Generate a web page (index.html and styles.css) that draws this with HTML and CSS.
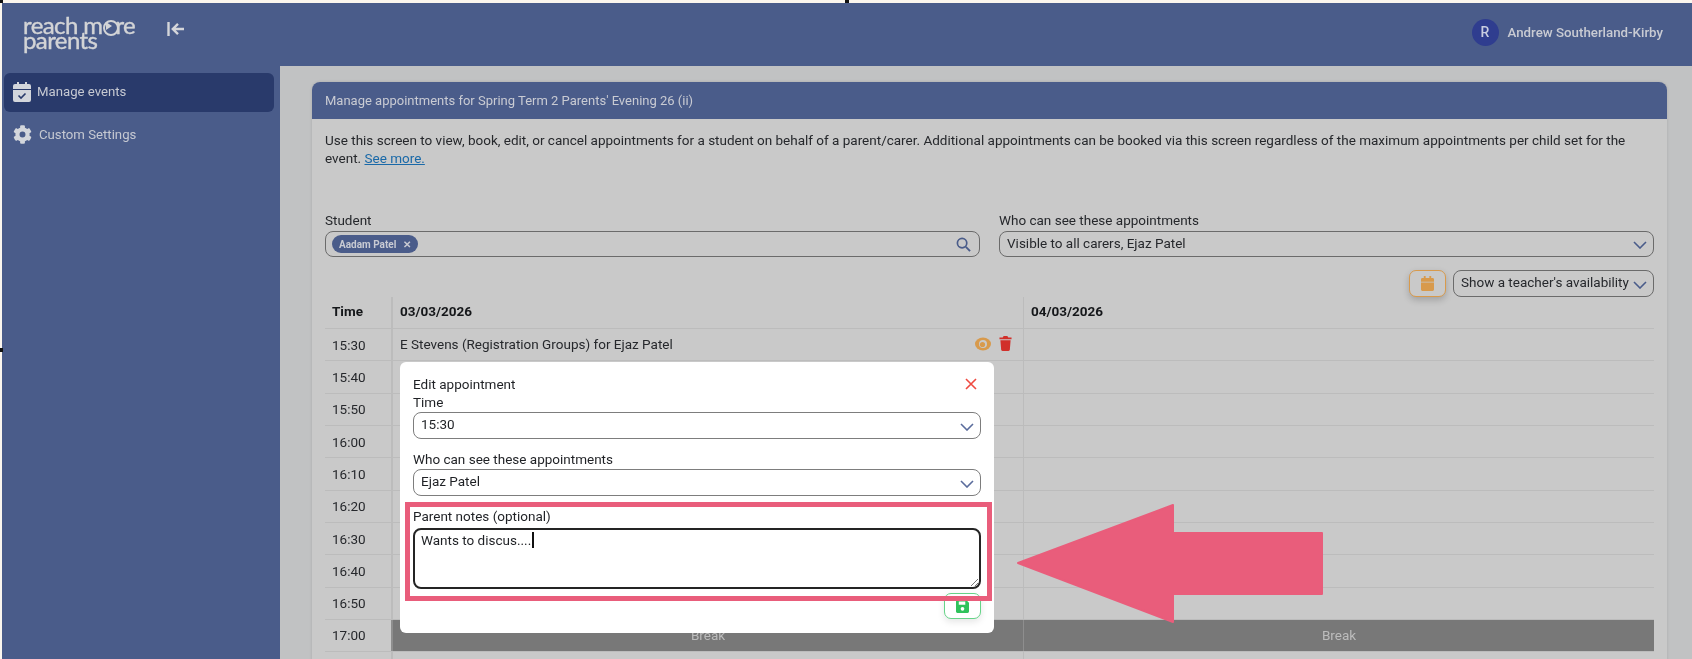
FILE: index.html
```html
<!DOCTYPE html>
<html lang="en">
<head>
<meta charset="utf-8">
<title>Manage appointments</title>
<link rel="stylesheet" href="styles.css">
</head>
<body>
<div class="page">
  <i class="tick tick-a"></i><i class="tick tick-b"></i><i class="tick tick-c"></i>
  <header class="topbar">
    <div class="brand">
      <div class="logo"><span>reach m<span class="logo-o">o</span>re</span><span>parents</span></div>
      <svg class="collapse" viewBox="0 0 18 16" width="18" height="16"><path d="M1.500 1v14" stroke="#d5d6da" stroke-width="2.400"/><path d="M17 8H6M11 2.800 5.800 8l5.200 5.200" fill="none" stroke="#d5d6da" stroke-width="2.400"/></svg>
    </div>
    <div class="user"><span class="avatar">R</span><span>Andrew Southerland-Kirby</span></div>
  </header>
  <div class="shell">
    <nav class="sidebar">
      <a class="nav-item active">
        <svg viewBox="0 0 18 20" width="18" height="20"><path fill="#d3d6dc" d="M4 0h2v2h6V0h2v2h2a2 2 0 0 1 2 2v3H0V4a2 2 0 0 1 2-2h2zM0 8h18v10a2 2 0 0 1-2 2H2a2 2 0 0 1-2-2z"/><path d="m5.500 13.500 2.500 2.500 4.500-4.500" fill="none" stroke="#293a6b" stroke-width="1.600"/></svg>
        <span>Manage events</span>
      </a>
      <a class="nav-item">
        <svg viewBox="0 0 512 512" width="19" height="19"><path fill="#d3d6dc" d="M487 316l-42-25c4-23 4-47 0-70l42-25c5-3 7-9 6-14-11-36-30-68-55-95-4-4-10-5-15-2l-42 25c-18-15-38-27-60-35V26c0-6-4-11-9-12-37-8-74-8-110 0-6 1-10 6-10 12v49c-22 8-42 20-60 35L90 85c-5-3-11-2-15 2-25 27-44 59-55 95-2 5 1 11 6 14l42 25c-4 23-4 47 0 70l-42 25c-5 3-8 9-6 14 11 36 30 68 55 95 4 4 10 5 15 2l42-25c18 15 38 27 60 35v49c0 6 4 11 10 12 37 8 74 8 110 0 5-1 9-6 9-12v-49c22-8 42-20 60-35l42 25c5 3 11 2 15-2 25-27 44-59 55-95 1-5-1-11-6-14zM256 336a80 80 0 1 1 0-160 80 80 0 0 1 0 160z"/></svg>
        <span>Custom Settings</span>
      </a>
    </nav>
    <main class="content">
      <section class="card">
        <h1 class="card-head">Manage appointments for Spring Term 2 Parents' Evening 26 (ii)</h1>
        <div class="card-body">
          <p class="intro">Use this screen to view, book, edit, or cancel appointments for a student on behalf of a parent/carer. Additional appointments can be booked via this screen regardless of the maximum appointments per child set for the event. <a href="#">See more.</a></p>
          <div class="filters">
            <div class="field">
              <label>Student</label>
              <div class="control">
                <span class="chip">Aadam Patel <b>✕</b></span>
                <svg class="control-icon" viewBox="0 0 16 16" width="15" height="15"><circle cx="6.500" cy="6.500" r="5" fill="none" stroke="#4a5c8a" stroke-width="1.800"/><path d="m10.500 10.500 4.500 4.500" stroke="#4a5c8a" stroke-width="2"/></svg>
              </div>
            </div>
            <div class="field">
              <label>Who can see these appointments</label>
              <div class="control"><span>Visible to all carers, Ejaz Patel</span><svg class="chev" viewBox="0 0 14 8" width="14" height="8"><path d="m1 1 6 6 6-6" fill="none" stroke="#4a5c8a" stroke-width="1.600"/></svg></div>
            </div>
          </div>
          <div class="tools">
            <button class="cal-btn"><svg viewBox="0 0 14 16" width="13" height="15"><path fill="#d89a4c" d="M3 0h2v2h4V0h2v2h1.500A1.500 1.500 0 0 1 14 3.500V6H0V3.500A1.500 1.500 0 0 1 1.500 2H3zM0 7h14v7.500a1.500 1.500 0 0 1-1.500 1.500h-11A1.500 1.500 0 0 1 0 14.500z"/></svg></button>
            <div class="control compact"><span>Show a teacher's availability</span><svg class="chev" viewBox="0 0 14 8" width="14" height="8"><path d="m1 1 6 6 6-6" fill="none" stroke="#4a5c8a" stroke-width="1.600"/></svg></div>
          </div>
          <div class="schedule">
            <div class="row head"><div>Time</div><div>03/03/2026</div><div>04/03/2026</div></div>
            <div class="row"><div>15:30</div><div class="booked"><span>E Stevens (Registration Groups) for Ejaz Patel</span>
              <span class="acts">
                <svg viewBox="0 0 16 14" width="16" height="14"><ellipse cx="8" cy="7" rx="8" ry="6.500" fill="#d89a4c"/><circle cx="8" cy="7" r="4" fill="#c9c9c9"/><circle cx="7.500" cy="7.500" r="2.600" fill="#d89a4c"/></svg>
                <svg viewBox="0 0 14 16" width="13" height="15"><path fill="#d12f2a" d="M5 0h4l1 1.500h3.500V3.500H.5V1.500H4zM1.500 4.500h11l-.8 10a1.500 1.500 0 0 1-1.500 1.500H3.800a1.500 1.500 0 0 1-1.500-1.500z"/></svg>
              </span></div><div></div></div>
            <div class="row"><div>15:40</div><div></div><div></div></div>
            <div class="row"><div>15:50</div><div></div><div></div></div>
            <div class="row"><div>16:00</div><div></div><div></div></div>
            <div class="row"><div>16:10</div><div></div><div></div></div>
            <div class="row"><div>16:20</div><div></div><div></div></div>
            <div class="row"><div>16:30</div><div></div><div></div></div>
            <div class="row"><div>16:40</div><div></div><div></div></div>
            <div class="row"><div>16:50</div><div></div><div></div></div>
            <div class="row break"><div>17:00</div><div>Break</div><div>Break</div></div>
            <div class="row"><div></div><div></div><div></div></div>
          </div>
        </div>
      </section>
    </main>
  </div>

  <div class="modal">
    <div class="modal-title"><span>Edit appointment</span><svg viewBox="0 0 12 12" width="12" height="12"><path d="m1 1 10 10M11 1 1 11" stroke="#ef4a41" stroke-width="1.600"/></svg></div>
    <label class="modal-label">Time</label>
    <div class="control light"><span>15:30</span><svg class="chev" viewBox="0 0 14 8" width="14" height="8"><path d="m1 1 6 6 6-6" fill="none" stroke="#5a6c9c" stroke-width="1.600"/></svg></div>
    <label class="modal-label gap">Who can see these appointments</label>
    <div class="control light"><span>Ejaz Patel</span><svg class="chev" viewBox="0 0 14 8" width="14" height="8"><path d="m1 1 6 6 6-6" fill="none" stroke="#5a6c9c" stroke-width="1.600"/></svg></div>
    <label class="modal-label notes-label">Parent notes (optional)</label>
    <div class="notes"><span>Wants to discus....</span><i class="caret"></i>
      <svg class="grip" viewBox="0 0 8 8" width="8" height="8"><path d="M8 1 1 8M8 5 5 8" stroke="#777" stroke-width="1"/></svg>
    </div>
    <button class="save"><svg viewBox="0 0 14 14" width="13" height="13"><path fill="#2fc25b" fill-rule="evenodd" d="M1.500 0H11l3 3v9.500a1.500 1.500 0 0 1-1.500 1.500h-11A1.500 1.500 0 0 1 0 12.500v-11A1.500 1.500 0 0 1 1.500 0zM3 1.500V5h7V1.500zM7 7.500a2 2 0 1 0 0 4 2 2 0 0 0 0-4z"/></svg></button>
  </div>

  <div class="highlight"></div>
  <svg class="arrow" viewBox="0 0 307 119" width="307" height="119"><path fill="#e95d7b" stroke="#e95d7b" stroke-width="2" stroke-linejoin="round" d="M2 59 157 1v28h149v61H157v28z"/></svg>
</div>
</body>
</html>
```
FILE: styles.css
```css
* { box-sizing: border-box; }
html, body { margin: 0; height: 100%; }
body { background: #c1c2c3; font-family: Roboto, "Liberation Sans", sans-serif; font-size: 13.5px; color: #26282c; }
svg { display: block; flex: none; }

.page { position: relative; width: 1692px; height: 659px; overflow: hidden; padding: 3px 0 0 2px; background: #fbf6ee; display: flex; flex-direction: column; filter: blur(.4px); }
.tick { position: absolute; background: #111; }
.tick-a { left: 0; top: 0; width: 3px; height: 3px; }
.tick-b { left: 845px; top: 0; width: 4px; height: 3px; }
.tick-c { left: 0; top: 348px; width: 3px; height: 4px; }

.topbar { height: 63px; flex: none; background: #4a5c8a; display: flex; justify-content: space-between; align-items: center; padding: 0 29px 5px 21px; }
.brand { display: flex; align-items: center; gap: 32px; }
.logo { display: flex; flex-direction: column; font-family: Lato, sans-serif; font-size: 24px; line-height: 15px; letter-spacing: -.6px; color: #d3d4d6; font-weight: 400; -webkit-text-stroke: .4px #d3d4d6; }
.logo-o { position: relative; color: transparent; -webkit-text-stroke: 0; }
.logo-o::before { content: ""; position: absolute; left: 1px; top: 10px; width: 12px; height: 12px; border: 2px solid #d3d4d6; border-radius: 50%; }
.logo-o::after { content: ""; position: absolute; left: 4px; top: 12px; border-left: 6px solid #d3d4d6; border-top: 4px solid transparent; border-bottom: 4px solid transparent; }
.collapse { margin-bottom: 6px; }
.user { display: flex; align-items: center; gap: 9px; color: #c9cbd3; font-size: 13.3px; font-weight: 500; }
.avatar { width: 27px; height: 27px; border-radius: 50%; background: #2f3d8f; color: #c9cde0; display: flex; align-items: center; justify-content: center; font-size: 14px; }

.shell { flex: 1; display: flex; min-height: 0; background: #c1c2c3; }
.sidebar { width: 278px; flex: none; background: #4a5c8a; padding: 7px 6px 0 2px; display: flex; flex-direction: column; gap: 2px; }
.nav-item { display: flex; align-items: center; gap: 6px; height: 39px; padding: 0 0 2px 9px; border-radius: 6px; color: #c6c9d2; font-size: 13.2px; }
.nav-item + .nav-item { gap: 7px; height: 40px; padding-bottom: 0; }
.nav-item.active { background: #293a6b; }

.content { flex: 1; min-width: 0; padding: 16px 25px 0 32px; }
.card { height: 600px; border-radius: 8px 8px 0 0; background: #c9c9c9; box-shadow: 0 0 3px rgba(0,0,0,.12); overflow: hidden; }
.card-head { margin: 0; height: 37px; background: #4a5c8a; color: #c9cbd3; font-size: 13px; font-weight: 400; line-height: 37px; padding-left: 13px; }
.card-body { padding: 13px 13px 0; }
.intro { margin: 0; line-height: 17.5px; height: 36px; }
.intro a { color: #1a69a8; text-decoration: underline; }

.filters { display: flex; gap: 19px; margin-top: 44px; }
.field { flex: 1; display: flex; flex-direction: column; }
.field:first-child { flex: none; width: 655px; }
.field label { line-height: 17px; height: 19px; }
.control { height: 26px; border: 1.5px solid #6b6b6b; border-radius: 8px; display: flex; align-items: center; justify-content: space-between; padding: 0 6px 3px 7px; white-space: nowrap; }
.control .chev { margin-top: 5px; }
.chip { background: #4a5c8a; color: #c9cbd3; font-size: 10px; font-weight: 700; height: 18px; border-radius: 9px; padding: 0 7px; display: flex; align-items: center; gap: 7px; margin-left: -1px; margin-top: 3px; }
.chip b { font-size: 10px; font-weight: 700; }
.control-icon { margin-right: 2px; margin-top: 3px; }

.tools { display: flex; justify-content: flex-end; gap: 7px; margin-top: 13px; }
.cal-btn { width: 37px; height: 27px; background: #c9c9c9; border: 1.5px solid #d89a4c; border-radius: 7px; display: flex; align-items: center; justify-content: center; padding: 0; box-shadow: 0 3px 7px rgba(0,0,0,.2); }
.compact { width: 201px; height: 27px; }

.schedule { margin-top: 0; }
.row { display: grid; grid-template-columns: 66px 632px 631px; height: 32.35px; border-bottom: 1px solid #bcbcbc; align-items: stretch; }
.row > div { display: flex; align-items: center; padding-left: 7px; border-left: 2px solid #bcbcbc; }
.row > div:first-child { border-left: 0; padding-left: 7px; }
.row > div:nth-child(3) { padding-left: 7px; border-left-width: 1px; }
.row.head { height: 32px; font-weight: 700; color: #15171a; padding-bottom: 0; }
.row.head > div { padding-bottom: 3px; }
.booked { justify-content: space-between; padding-right: 11px; padding-bottom: 2px; }
.acts { display: flex; align-items: center; gap: 8px; }
.row.break { background: #787878; color: #bcbcbc; height: 32px; border-bottom: 1px solid #bcbcbc; }
.row.break > div { justify-content: center; padding: 0 0 2px; border-left-color: #8e8e8e; }
.row.break > div:first-child { background: #c9c9c9; color: #26282c; justify-content: flex-start; padding-left: 7px; }

.modal { position: absolute; left: 400px; top: 362px; width: 594px; height: 271px; background: #fff; border-radius: 6px; padding: 12px 13px 0; color: #1f2125; }
.modal-title { display: flex; justify-content: space-between; align-items: center; height: 20px; padding-right: 4px; }
.modal-label { display: block; line-height: 17px; height: 18px; }
.modal-label.gap { margin-top: 12px; height: 18px; }
.notes-label { margin-top: 12px; height: 20px; }
.light { border-color: #7d7d7d; height: 27px; color: #1f2125; padding-bottom: 3px; }
.notes { position: relative; height: 61px; border: 2px solid #242424; border-radius: 8px; padding: 1px 6px; line-height: 18px; display: flex; align-items: flex-start; }
.caret { width: 2px; height: 16px; background: #111; margin-left: 1px; margin-top: 1px; }
.grip { position: absolute; right: 1px; bottom: 1px; }
.save { position: absolute; right: 13px; bottom: 14px; width: 37px; height: 26px; background: #fff; border: 1px solid #66d488; border-radius: 7px; display: flex; align-items: center; justify-content: center; padding: 0; box-shadow: 0 3px 7px rgba(0,0,0,.1); }

.highlight { position: absolute; left: 405px; top: 502px; width: 587px; height: 99px; border: 5px solid #e95d7b; }
.arrow { position: absolute; left: 1016px; top: 504px; }
```
